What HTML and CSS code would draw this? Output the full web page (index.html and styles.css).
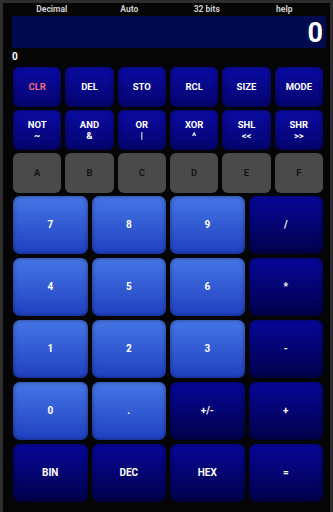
FILE: index.html
```html
<!DOCTYPE html>
<html lang="en">
  <head>
    <meta charset="UTF-8" />
    <meta name="viewport" content="width=device-width, initial-scale=1.0" />
    <link rel="stylesheet" href="styles.css">
  </head>
  <body>
    <div class="frame">
      <div class="status">
        <span>Decimal</span>
        <span>Auto</span>
        <span>32 bits</span>
        <span>help</span>
      </div>

      <div class="display">0</div>
      <div class="memory">0</div>

      <div class="keys six">
        <button class="key top clr">CLR</button>
        <button class="key top">DEL</button>
        <button class="key top">STO</button>
        <button class="key top">RCL</button>
        <button class="key top">SIZE</button>
        <button class="key top">MODE</button>
      </div>

      <div class="keys six">
        <button class="key top two">NOT<br>~</button>
        <button class="key top two">AND<br>&amp;</button>
        <button class="key top two">OR<br>|</button>
        <button class="key top two">XOR<br>^</button>
        <button class="key top two">SHL<br>&lt;&lt;</button>
        <button class="key top two">SHR<br>&gt;&gt;</button>
      </div>

      <div class="keys six">
        <button class="key hex">A</button>
        <button class="key hex">B</button>
        <button class="key hex">C</button>
        <button class="key hex">D</button>
        <button class="key hex">E</button>
        <button class="key hex">F</button>
      </div>

      <div class="keys four">
        <button class="key num">7</button>
        <button class="key num">8</button>
        <button class="key num">9</button>
        <button class="key op">/</button>

        <button class="key num">4</button>
        <button class="key num">5</button>
        <button class="key num">6</button>
        <button class="key op">*</button>

        <button class="key num">1</button>
        <button class="key num">2</button>
        <button class="key num">3</button>
        <button class="key op">-</button>

        <button class="key num">0</button>
        <button class="key num">.</button>
        <button class="key op">+/-</button>
        <button class="key op">+</button>

        <button class="key op">BIN</button>
        <button class="key op">DEC</button>
        <button class="key op">HEX</button>
        <button class="key op">=</button>
      </div>
    </div>
  </body>
</html>
```

FILE: styles.css
```css
body {
  margin: 0;
  background: #050505;
  font-family: Roboto, "Liberation Sans", sans-serif;
}

.frame {
  box-sizing: border-box;
  width: 333px;
  height: 512px;
  padding: 0 7px 0 10px;
  border-left: 3px solid #2e2e2e;
  border-right: 3px solid #2e2e2e;
  border-top: 3px solid #2e2e2e;
}

.status {
  display: grid;
  grid-template-columns: repeat(4, 1fr);
  height: 13px;
  font-size: 8.5px;
  font-weight: bold;
  color: #cfcfcf;
  text-align: center;
  line-height: 13px;
}

.display {
  height: 32px;
  margin: 0 -3px 0 -1px;
  padding-right: 3px;
  background: #000a4e;
  color: #fff;
  font-size: 27px;
  font-weight: bold;
  text-align: right;
  line-height: 34px;
}

.memory {
  height: 18px;
  margin-left: -1px;
  color: #fff;
  font-size: 10px;
  font-weight: bold;
  line-height: 18px;
}

.keys {
  display: grid;
  gap: 4px;
  margin-top: 1px;
}

.six {
  grid-template-columns: repeat(6, 1fr);
  grid-auto-rows: 40px;
  margin-bottom: 3px;
}

.four {
  grid-template-columns: repeat(4, 1fr);
  grid-auto-rows: 58px;
  margin-top: 0;
}

.key {
  border: none;
  border-radius: 6px;
  padding: 0;
  color: #fff;
  font-family: inherit;
  font-size: 9.5px;
  font-weight: bold;
  line-height: 12px;
  box-shadow: inset 0 0 4px rgba(0, 0, 0, 0.45);
}

.top {
  background: linear-gradient(#0b0ba4, #04046e);
}

.two {
  line-height: 11px;
}

.clr {
  color: #f26a78;
}

.hex {
  background: #4a4a4a;
  color: #141414;
  box-shadow: none;
}

.num {
  border-radius: 7px;
  font-size: 10px;
  background: linear-gradient(#4676e6, #1f40c0);
}

.op {
  border-radius: 7px;
  font-size: 10px;
  background: linear-gradient(#07079a, #01014a);
}
```
